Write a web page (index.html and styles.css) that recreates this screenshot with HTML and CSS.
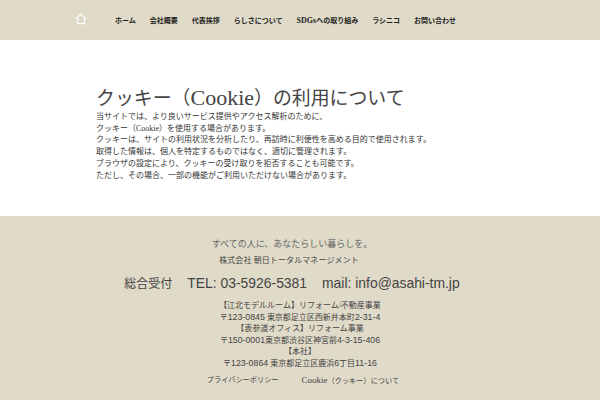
FILE: index.html
```html
<!DOCTYPE html>
<html lang="ja">
<head>
	<meta charset="UTF-8">
	<title>クッキー（Cookie）の利用について</title>
	<link rel="stylesheet" href="styles.css">
</head>
<body>
	<header class="header">
		<a class="home" href="#">
			<svg class="home-icon" width="12" height="12" viewBox="0 0 14 14" fill="none" stroke="#fff" stroke-width="1.2">
				<path d="M1 6.8 7 1.2l6 5.6M3 5.8v6.6h8V5.8"/>
			</svg>
		</a>
		<ul class="nav">
			<li><a href="#">ホーム</a></li>
			<li><a href="#">会社概要</a></li>
			<li><a href="#">代表挨拶</a></li>
			<li><a href="#">らしさについて</a></li>
			<li><a href="#"><span class="sdgs">SDGs</span>への取り組み</a></li>
			<li><a href="#">ラシニコ</a></li>
			<li><a href="#">お問い合わせ</a></li>
		</ul>
	</header>
	<main class="main">
		<h1 class="title">クッキー（<span class="title-en">Cookie</span>）の利用について</h1>
		<p class="text">当サイトでは、より良いサービス提供やアクセス解析のために、<br>
		クッキー（Cookie）を使用する場合があります。<br>
		クッキーは、サイトの利用状況を分析したり、再訪時に利便性を高める目的で使用されます。<br>
		取得した情報は、個人を特定するものではなく、適切に管理されます。<br>
		ブラウザの設定により、クッキーの受け取りを拒否することも可能です。<br>
		ただし、その場合、一部の機能がご利用いただけない場合があります。</p>
	</main>
	<footer class="footer">
		<div class="lead">
			<p class="catch">すべての人に、あなたらしい暮らしを。</p>
			<p class="company">株式会社 朝日トータルマネージメント</p>
			<p class="contact">総合受付<span class="contact-en">TEL: 03-5926-5381</span><span class="contact-en">mail: info@asahi-tm.jp</span></p>
		</div>
		<div class="address">
			<p>【江北モデルルーム】リフォーム/不動産事業</p>
			<p>〒<span class="num">123-0845</span> 東京都足立区西新井本町<span class="num">2-31-4</span></p>
			<p>【表参道オフィス】リフォーム事業</p>
			<p>〒<span class="num">150-0001</span>東京都渋谷区神宮前<span class="num">4-3-15-406</span></p>
			<p>【本社】</p>
			<p>〒<span class="num">123-0864</span> 東京都足立区鹿浜<span class="num">6</span>丁目<span class="num">11-16</span></p>
		</div>
		<ul class="links">
			<li><a href="#">プライバシーポリシー</a></li>
			<li><a href="#"><span class="links-en">Cookie</span>（クッキー）について</a></li>
		</ul>
	</footer>
</body>
</html>
```

FILE: styles.css
```css
*{
	margin: 0;
	padding: 0;
	box-sizing: border-box;
}
ul li{
	list-style-type: none;
}
a{
	color: inherit;
	text-decoration: none;
}
body{
	width: 600px;
	height: 400px;
	overflow: hidden;
	font-family: "Liberation Serif", "Noto Sans CJK JP", serif;
	color: #333;
	background: #fff;
}
.header{
	display: flex;
	align-items: center;
	height: 40px;
	padding-left: 75px;
	background: #e0dac8;
}
.home{
	display: block;
	width: 40px;
	height: 14px;
}
.home-icon{
	display: block;
}
.nav{
	display: flex;
	gap: 14px;
	font-size: 7px;
	font-weight: bold;
	color: #222;
}
.sdgs{
	font-size: 8px;
}
.main{
	height: 176px;
	padding: 46px 0 0 96px;
}
.title{
	font-size: 18.9px;
	font-weight: normal;
	line-height: 24px;
	color: #444;
}
.title-en{
	font-size: 22px;
}
.text{
	font-size: 8px;
	line-height: 11.7px;
}
.footer{
	height: 184px;
	padding-top: 22px;
	text-align: center;
	color: #444;
	background: #e0dac8;
}
.lead{
	padding-right: 16px;
}
.catch{
	font-size: 9px;
	line-height: 12px;
	color: #666;
}
.company{
	margin-top: 5px;
	padding-right: 6px;
	font-size: 8px;
	letter-spacing: .1px;
	line-height: 12px;
}
.contact{
	margin-top: 6px;
	font-size: 12px;
	line-height: 20px;
}
.contact-en{
	margin-left: 15px;
	font-family: "Liberation Sans", sans-serif;
	font-size: 13.9px;
}
.address{
	margin-top: 6px;
	font-size: 8px;
	line-height: 11.6px;
}
.num{
	font-family: "Liberation Sans", sans-serif;
	font-size: 8.8px;
}
.links{
	display: flex;
	justify-content: center;
	gap: 23px;
	margin-top: 4px;
	padding-left: 6px;
	font-size: 7.2px;
	line-height: 12px;
}
.links-en{
	font-size: 9px;
}
```
